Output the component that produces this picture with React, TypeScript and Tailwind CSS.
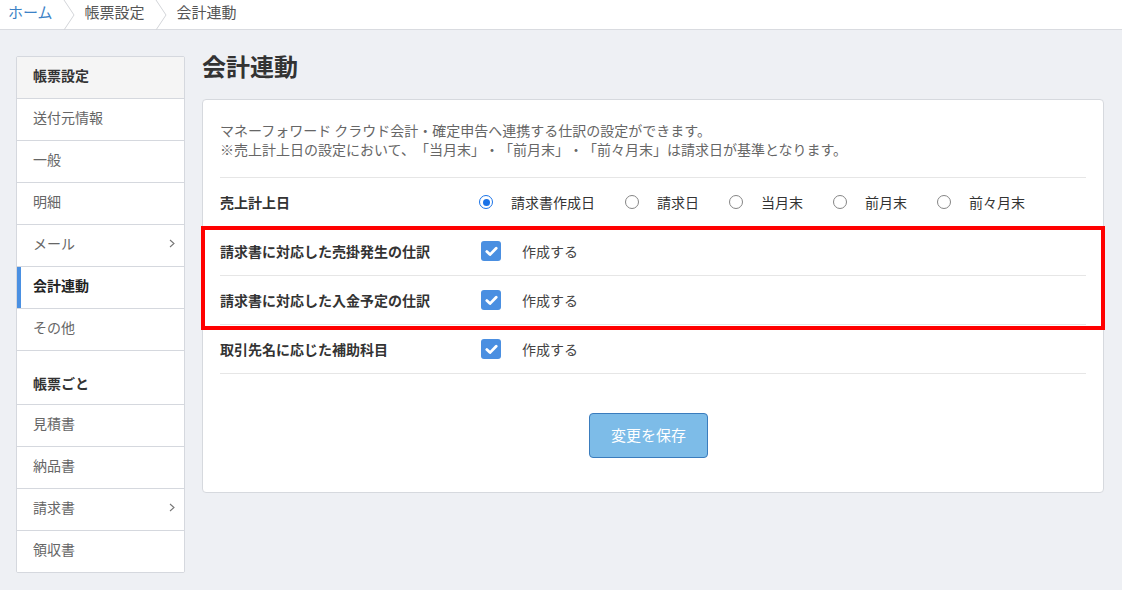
import React from 'react'

const font = { fontFamily: '"Noto Sans CJK JP", "Noto Sans", sans-serif' }

function Crumb({ label, link, last }: { label: string; link?: boolean; last?: boolean }) {
  return (
    <div className="flex items-center h-full">
      <span className={`mb-[5px] ${link ? 'text-[#3c82c6]' : 'text-[#555]'}`}>{label}</span>
      {!last && (
        <svg width="12" height="30" viewBox="0 0 12 30" className="mx-[10px]">
          <path d="M1 0 L11 15 L1 30" fill="none" stroke="#d3d5d9" strokeWidth="1" />
        </svg>
      )}
    </div>
  )
}

function Chevron() {
  return (
    <svg width="6" height="9" viewBox="0 0 6 9" className="mr-[9px]">
      <path d="M1 1 L5 4.5 L1 8" fill="none" stroke="#777" strokeWidth="1.1" />
    </svg>
  )
}

function SideItem({ label, active, header, arrow }: { label: string; active?: boolean; header?: boolean; arrow?: boolean }) {
  return (
    <div
      className={`relative flex items-center justify-between h-[42px] last:h-[41px] pl-[16px] pb-[5px] border-b border-[#d5d8de] last:border-b-0 ${
        header ? 'bg-[#f5f5f5] font-bold text-[#333]' : active ? 'bg-white font-bold text-[#222]' : 'bg-white text-[#666]'
      }`}
    >
      {active && <div className="absolute left-0 top-0 bottom-0 w-[4px] bg-[#4a90e2]" />}
      <span>{label}</span>
      {arrow && <Chevron />}
    </div>
  )
}

function Radio({ label, checked }: { label: string; checked?: boolean }) {
  return (
    <div className="flex items-center mr-[30px]">
      {checked ? (
        <div className="w-[14px] h-[14px] rounded-full border-[1.5px] border-[#1a73e8] flex items-center justify-center">
          <div className="w-[7px] h-[7px] rounded-full bg-[#1a73e8]" />
        </div>
      ) : (
        <div className="w-[14px] h-[14px] rounded-full border border-[#858585] bg-white" />
      )}
      <span className="ml-[18px] text-[#333]">{label}</span>
    </div>
  )
}

function Check() {
  return (
    <div className="flex items-center">
      <div className="w-[20px] h-[20px] rounded-[3px] bg-[#4a8fe1] flex items-center justify-center ml-[2px]">
        <svg width="13" height="11" viewBox="0 0 13 11">
          <path d="M1.8 5.6 L5 8.6 L11.2 2.2" fill="none" stroke="#fff" strokeWidth="2.8" strokeLinecap="round" strokeLinejoin="round" />
        </svg>
      </div>
      <span className="ml-[21px] text-[#444]">作成する</span>
    </div>
  )
}

function Row({ label, children }: { label: string; children: React.ReactNode }) {
  return (
    <div className="flex items-center h-[49px] border-b border-[#e6e6e6]">
      <div className="w-[259px] font-bold text-[#333]">{label}</div>
      <div className="flex items-center">{children}</div>
    </div>
  )
}

export default function App() {
  return (
    <div className="w-full h-[590px] bg-[#eef0f4] text-[14px] overflow-hidden" style={font}>
      <div className="h-[30px] bg-white border-b border-[#d9dbe0] flex items-center pl-[8px] text-[15px]">
        <Crumb label="ホーム" link />
        <Crumb label="帳票設定" />
        <Crumb label="会計連動" last />
      </div>

      <div className="flex pl-[16px] pr-[18px] pt-[26px] gap-[17px]">
        <div className="w-[169px] shrink-0 border border-[#d5d8de] rounded-[2px] overflow-hidden bg-white leading-[19px]">
          <SideItem label="帳票設定" header />
          <SideItem label="送付元情報" />
          <SideItem label="一般" />
          <SideItem label="明細" />
          <SideItem label="メール" arrow />
          <SideItem label="会計連動" active />
          <SideItem label="その他" />
          <div className="h-[54px] pt-[23px] pl-[16px] border-b border-[#d5d8de] font-bold text-[#333]">帳票ごと</div>
          <SideItem label="見積書" />
          <SideItem label="納品書" />
          <SideItem label="請求書" arrow />
          <SideItem label="領収書" />
        </div>

        <div className="flex-1">
          <h1 className="text-[24px] leading-[24px] font-bold text-[#333] mt-[-2px] mb-[21px]">会計連動</h1>
          <div className="relative bg-white border border-[#d6d9de] rounded-[4px] px-[17px] pt-[21px] pb-[34px]">
            <div className="text-[#666] leading-[19px] pb-[18px] border-b border-[#e6e6e6] [text-spacing-trim:space-all]">
              <p>マネーフォワード クラウド会計・確定申告へ連携する仕訳の設定ができます。</p>
              <p>※売上計上日の設定において、「当月末」・「前月末」・「前々月末」は請求日が基準となります。</p>
            </div>
            <Row label="売上計上日">
              <Radio label="請求書作成日" checked />
              <Radio label="請求日" />
              <Radio label="当月末" />
              <Radio label="前月末" />
              <Radio label="前々月末" />
            </Row>
            <Row label="請求書に対応した売掛発生の仕訳">
              <Check />
            </Row>
            <Row label="請求書に対応した入金予定の仕訳">
              <Check />
            </Row>
            <Row label="取引先名に応じた補助科目">
              <Check />
            </Row>
            <div className="flex justify-center mt-[39px] pr-[9px]">
              <button className="w-[119px] h-[45px] rounded-[4px] bg-[#7dbce8] border border-[#3a7cbd] text-white text-[15px]">
                変更を保存
              </button>
            </div>

            <div className="absolute left-[-2px] top-[126px] w-[904px] h-[104px] border-[4px] border-[#ff0000] pointer-events-none" />
          </div>
        </div>
      </div>
    </div>
  )
}
